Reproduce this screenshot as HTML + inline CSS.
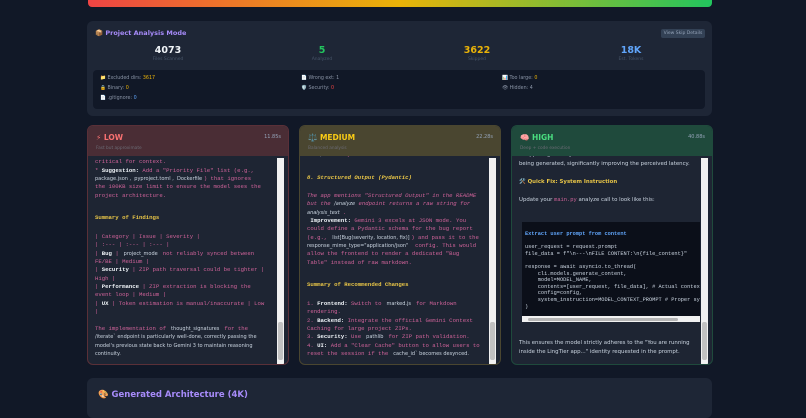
<!DOCTYPE html>
<html><head><meta charset="utf-8"><style>
*{box-sizing:border-box;margin:0;padding:0}
body{width:806px;height:407px;background:#111827;overflow:hidden;position:relative;font-family:"DejaVu Sans","Liberation Sans",sans-serif;color:#cbd5e1}
.bar{position:absolute;left:88px;top:0;width:624px;height:7px;border-radius:0 0 4px 4px;background:linear-gradient(90deg,#ef4444,#eab308 50%,#22c55e)}
.card{position:absolute;left:87px;top:21px;width:625px;height:95px;background:#1e2636;border-radius:6px}
.ttl{position:absolute;left:8px;top:8px;font-size:6.5px;font-weight:bold;color:#a78bfa}
.btn{position:absolute;right:7px;top:8px;width:44px;height:9px;background:#334155;border-radius:2px;font-size:4.5px;color:#94a3b8;text-align:center;line-height:9px}
.st{position:absolute;top:24px;width:140px;text-align:center}
.st b{display:block;font-size:9.5px;line-height:11px}
.st i{display:block;font-style:normal;font-size:4.5px;color:#475569;margin-top:1px}
.inner{position:absolute;left:6px;top:49px;width:612px;height:39px;background:#111827;border-radius:4px;font-size:4.8px;color:#8a94a6}
.inner span{position:absolute}
.col{position:absolute;top:125px;width:202px;height:240px;border-radius:6px;background:#1e2533;overflow:hidden}
.hd{position:absolute;left:0;top:0;width:100%;height:30px}
.hd .n{position:absolute;left:8px;top:7px;font-size:7.5px;font-weight:bold}
.hd .s{position:absolute;left:8px;top:20px;font-size:4.3px;color:#6b6b75}
.hd .t{position:absolute;right:7px;top:8px;font-size:5px;color:#94a3b8}
.bd{position:absolute;left:7px;top:30px;width:181px;height:207px;overflow:hidden}
.sb{position:absolute;right:4px;top:32px;width:7px;height:206px;background:#f1f1f1}
.sb:after{content:"";position:absolute;left:1px;bottom:4px;width:5px;height:38px;background:#c1c1c1;border-radius:2px}
.m{font-family:"Liberation Mono",monospace;font-size:5.65px;line-height:8.35px;color:#d0639a;position:absolute;left:0;white-space:pre}
.m b{color:#f1f5f9}
.y{color:#e8c547;font-weight:bold}
.sn{font-family:"DejaVu Sans",sans-serif;font-size:5px;color:#cbd5e1}
.p{font-size:5.4px;line-height:9px;color:#cbd5e1;position:absolute;left:0;white-space:pre}
.code{position:absolute;left:3px;top:66px;width:178px;height:99px;background:#0b0f19;font-family:"Liberation Mono",monospace;font-size:5.3px;line-height:6.6px;color:#cbd5e1;white-space:pre;padding:9px 3px 0 3px;overflow:hidden}
.hs{position:absolute;left:3px;top:160px;width:178px;height:6px;background:#f1f1f1}
.hs:after{content:"";position:absolute;left:6px;top:2px;width:150px;height:3px;background:#b5b5b5;border-radius:2px}
.card2{position:absolute;left:87px;top:378px;width:625px;height:40px;background:#1e2636;border-radius:6px}
</style></head><body>
<div class="bar"></div>
<div class="card">
<div class="ttl">📦 Project Analysis Mode</div>
<div class="btn">View Skip Details</div>
<div class="st" style="left:11px"><b style="color:#f1f5f9">4073</b><i>Files Scanned</i></div>
<div class="st" style="left:165px"><b style="color:#22c55e">5</b><i>Analyzed</i></div>
<div class="st" style="left:320px"><b style="color:#eab308">3622</b><i>Skipped</i></div>
<div class="st" style="left:474px"><b style="color:#60a5fa">18K</b><i>Est. Tokens</i></div>
<div class="inner">
<span style="left:7px;top:6px">📁 Excluded dirs: <span style="position:static;color:#eab308">3617</span></span>
<span style="left:208px;top:6px">📄 Wrong ext: 1</span>
<span style="left:409px;top:6px">📊 Too large: <span style="position:static;color:#eab308">0</span></span>
<span style="left:7px;top:16px">🔒 Binary: <span style="position:static;color:#eab308">0</span></span>
<span style="left:208px;top:16px">🛡️ Security: <span style="position:static;color:#ef4444">0</span></span>
<span style="left:409px;top:16px">👁 Hidden: 4</span>
<span style="left:7px;top:26px">📄 .gitignore: <span style="position:static;color:#60a5fa">0</span></span>
</div></div>

<div class="col" style="left:87px;border:1px solid #5a3038">
<div class="hd" style="background:#4a2d35"><div class="n" style="color:#f87171">⚡ LOW</div><div class="s">Fast but approximate</div><div class="t">11.85s</div></div>
<div class="bd">
<div class="m" style="top:-6px">skipping package.lock.json is good, but package.json is
critical for context.
* <b>Suggestion:</b> Add a "Priority File" list (e.g.,
<span class="sn">package.json ,  pyproject.toml ,  Dockerfile </span>) that ignores
the 100KB size limit to ensure the model sees the
project architecture.</div>
<div class="m y" style="top:58px">Summary of Findings</div>
<div class="m" style="top:77px">| Category | Issue | Severity |
| :--- | :--- | :--- |
| <b>Bug</b> | <span class="sn"> project_mode </span> not reliably synced between
FE/BE | Medium |
| <b>Security</b> | ZIP path traversal could be tighter |
High |
| <b>Performance</b> | ZIP extraction is blocking the
event loop | Medium |
| <b>UX</b> | Token estimation is manual/inaccurate | Low
|</div>
<div class="m" style="top:169px">The implementation of <span class="sn"> thought_signatures </span> for the
<span class="sn">/iterate` endpoint is particularly well-done, correctly passing the
model's previous state back to Gemini 3 to maintain reasoning
continuity.</span></div>
</div>
<div class="sb"></div></div>

<div class="col" style="left:299px;border:1px solid #4a4630">
<div class="hd" style="background:#4a4630"><div class="n" style="color:#facc15">⚖️ MEDIUM</div><div class="s">Balanced analysis</div><div class="t">22.28s</div></div>
<div class="bd">
<div class="m" style="top:-5px">via <span class="sn">/sessions</span> ).</div>
<div class="m y" style="top:18px"><i>8. Structured Output (Pydantic)</i></div>
<div class="m" style="top:36px"><i>The app mentions "Structured Output" in the README
but the <span class="sn">/analyze</span> endpoint returns a raw string for
<span class="sn">analysis_text</span> .</i>
 <b>Improvement:</b> Gemini 3 excels at JSON mode. You
could define a Pydantic schema for the bug report
(e.g., <span class="sn"> list[Bug(severity, location, fix)] </span>) and pass it to the
<span class="sn">response_mime_type="application/json"</span>  config. This would
allow the frontend to render a dedicated "Bug
Table" instead of raw markdown.</div>
<div class="m y" style="top:125px">Summary of Recommended Changes</div>
<div class="m" style="top:144px">1. <b>Frontend:</b> Switch to <span class="sn"> marked.js </span> for Markdown
rendering.
2. <b>Backend:</b> Integrate the official Gemini Context
Caching for large project ZIPs.
3. <b>Security:</b> Use <span class="sn"> pathlib </span> for ZIP path validation.
4. <b>UI:</b> Add a "Clear Cache" button to allow users to
reset the session if the <span class="sn"> cache_id` becomes desynced.</span></div>
</div>
<div class="sb"></div></div>

<div class="col" style="left:511px;border:1px solid #1f4a3c">
<div class="hd" style="background:#1f4a3c"><div class="n" style="color:#4ade80">🧠 HIGH</div><div class="s">Deep + code execution</div><div class="t">40.88s</div></div>
<div class="bd">
<div class="p" style="top:-5px">to appear gradually as it is
being generated, significantly improving the perceived latency.

<span class="y">🛠️ Quick Fix: System Instruction</span>

Update your <span style="font-family:'Liberation Mono',monospace;color:#d0639a">main.py</span> analyze call to look like this:</div>
<div class="code"><span style="color:#60a5fa;font-weight:bold">Extract user prompt from content</span>

user_request = request.prompt
file_data = f"\n---\nFILE CONTENT:\n{file_content}"

response = await asyncio.to_thread(
    cli.models.generate_content,
    model=MODEL_NAME,
    contents=[user_request, file_data], # Actual context
    config=config,
    system_instruction=MODEL_CONTEXT_PROMPT # Proper system
)</div>
<div class="hs"></div>
<div class="p" style="top:183px">This ensures the model strictly adheres to the "You are running
inside the LingTier app..." identity requested in the prompt.</div>
</div>
<div class="sb"></div></div>

<div class="card2"><div style="position:absolute;left:11px;top:12px;font-size:8.5px;font-weight:bold;color:#a78bfa">🎨 Generated Architecture (4K)</div></div>
</body></html>
